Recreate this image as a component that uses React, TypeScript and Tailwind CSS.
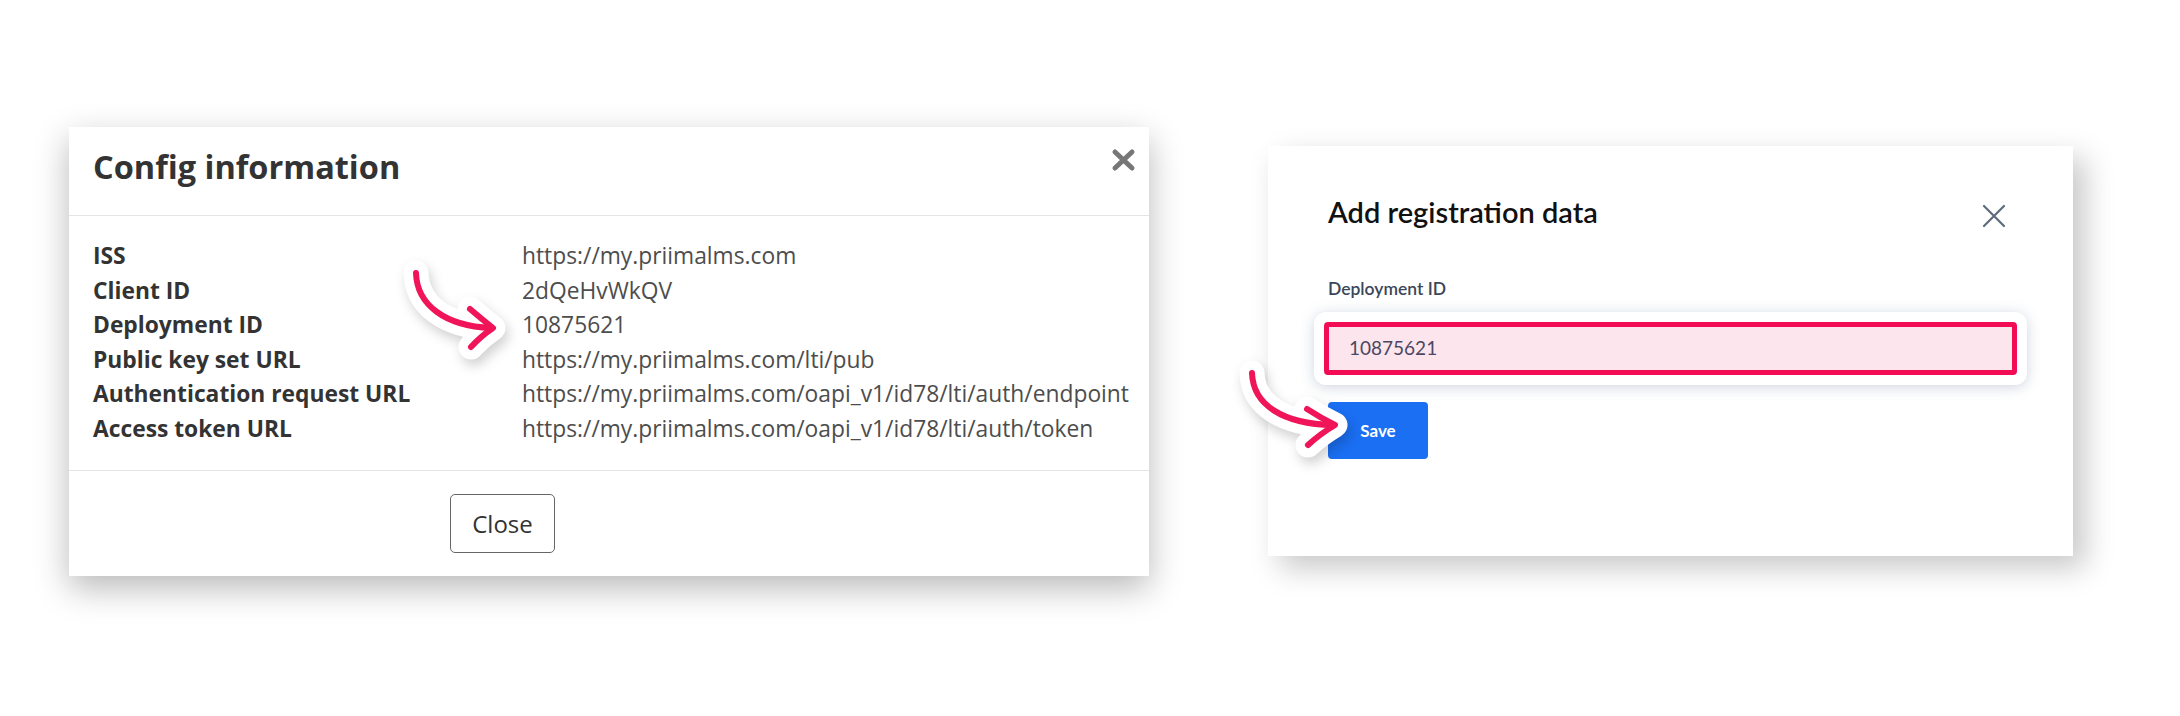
import React from "react";

const rows: [string, string][] = [
  ["ISS", "https://my.priimalms.com"],
  ["Client ID", "2dQeHvWkQV"],
  ["Deployment ID", "10875621"],
  ["Public key set URL", "https://my.priimalms.com/lti/pub"],
  ["Authentication request URL", "https://my.priimalms.com/oapi_v1/id78/lti/auth/endpoint"],
  ["Access token URL", "https://my.priimalms.com/oapi_v1/id78/lti/auth/token"],
];

// pink swoosh arrow with white outline, drawn over the screenshots
const Arrow = ({ d, head, className }: { d: string; head: string; className: string }) => (
  <svg
    width="120"
    height="120"
    viewBox="0 0 120 120"
    fill="none"
    className={`absolute drop-shadow-[3px_6px_6px_rgba(0,0,0,0.18)] ${className}`}
  >
    <path d={d} stroke="#fff" strokeWidth="25" strokeLinecap="round" strokeLinejoin="round" />
    <path d={head} stroke="#fff" strokeWidth="25" strokeLinecap="round" strokeLinejoin="round" />
    <path d={d} stroke="#f01458" strokeWidth="6" strokeLinecap="round" />
    <path d={head} stroke="#f01458" strokeWidth="6" strokeLinecap="round" strokeLinejoin="round" />
  </svg>
);

const ConfigDialog = () => (
  <div className="w-[1080px] bg-white shadow-[0_12px_32px_rgba(0,0,0,0.28)] font-['Open_Sans',sans-serif] text-[#333]">
    <div className="h-[89px] pl-[24px] pr-[13px] flex items-center justify-between border-b border-[#e5e5e5]">
      <h2 className="text-[32.5px] font-bold leading-none pb-[7px]">Config information</h2>
      <button className="self-start mt-[21px] text-[#777]">
        <svg width="25" height="24" viewBox="0 0 25 24">
          <path d="M4 4 L21 20 M21 4 L4 20" stroke="currentColor" strokeWidth="5" strokeLinecap="round" />
        </svg>
      </button>
    </div>
    <div className="px-[24px] pt-[23px] pb-[24px] grid grid-cols-[429px_1fr] text-[22.8px] leading-[34.5px]">
      {rows.map(([label, value]) => (
        <React.Fragment key={label}>
          <div className="font-bold text-[#333]">{label}</div>
          <div className="text-[#4d4d4d]">{value}</div>
        </React.Fragment>
      ))}
    </div>
    <div className="border-t border-[#e5e5e5] pl-[381px] pt-[23px] pb-[23px]">
      <button className="w-[105px] h-[59px] rounded-[5px] border border-[#666] text-[24px] text-[#333]">
        Close
      </button>
    </div>
  </div>
);

const RegistrationDialog = () => (
  <div className="mt-[19px] w-[805px] h-[410px] bg-white shadow-[12px_12px_28px_rgba(0,0,0,0.22)] px-[60px] pt-[49px] font-['Lato',sans-serif]">
    <div className="flex items-center justify-between">
      <h2 className="text-[29px] font-semibold text-[#111] leading-[34px]">Add registration data</h2>
      <button className="mr-[7px] mt-[8px] text-[#5f6b7a]">
        <svg width="24" height="24" viewBox="0 0 24 24">
          <path d="M2 2 L22 22 M22 2 L2 22" stroke="currentColor" strokeWidth="2.2" strokeLinecap="round" />
        </svg>
      </button>
    </div>
    <div className="mt-[50px] text-[17.5px] font-semibold text-[#3b4758] leading-[20px]">Deployment ID</div>
    <div className="mt-[13px] -mx-[14px] p-[10px] bg-white rounded-[12px] shadow-[0_2px_14px_rgba(90,115,150,0.3)]">
      <div className="h-[53px] rounded-[4px] border-[5px] border-[#f20c55] bg-[#fce5ec] flex items-center pl-[20px] text-[19px] text-[#4b4763]">
        10875621
      </div>
    </div>
    <button className="mt-[17px] w-[100px] h-[57px] rounded-[4px] bg-[#1b6ff3] text-white text-[17px] font-bold">
      Save
    </button>
  </div>
);

const App = () => (
  <div className="relative w-[2180px] h-[716px] bg-white overflow-hidden">
    <div className="flex items-start pl-[69px] pt-[127px] gap-[119px]">
      <ConfigDialog />
      <RegistrationDialog />
    </div>
    <Arrow
      className="left-[395px] top-[250px]"
      d="M21 23 C 22 55, 50 76, 96 78"
      head="M75 59 Q 88 70 98 78 Q 86 86 76 97"
    />
    <Arrow
      className="left-[1235px] top-[350px]"
      d="M17 23 C 18 55, 48 74, 98 75"
      head="M72 59 Q 86 68 100 75 Q 85 84 73 95"
    />
  </div>
);

export default App;
